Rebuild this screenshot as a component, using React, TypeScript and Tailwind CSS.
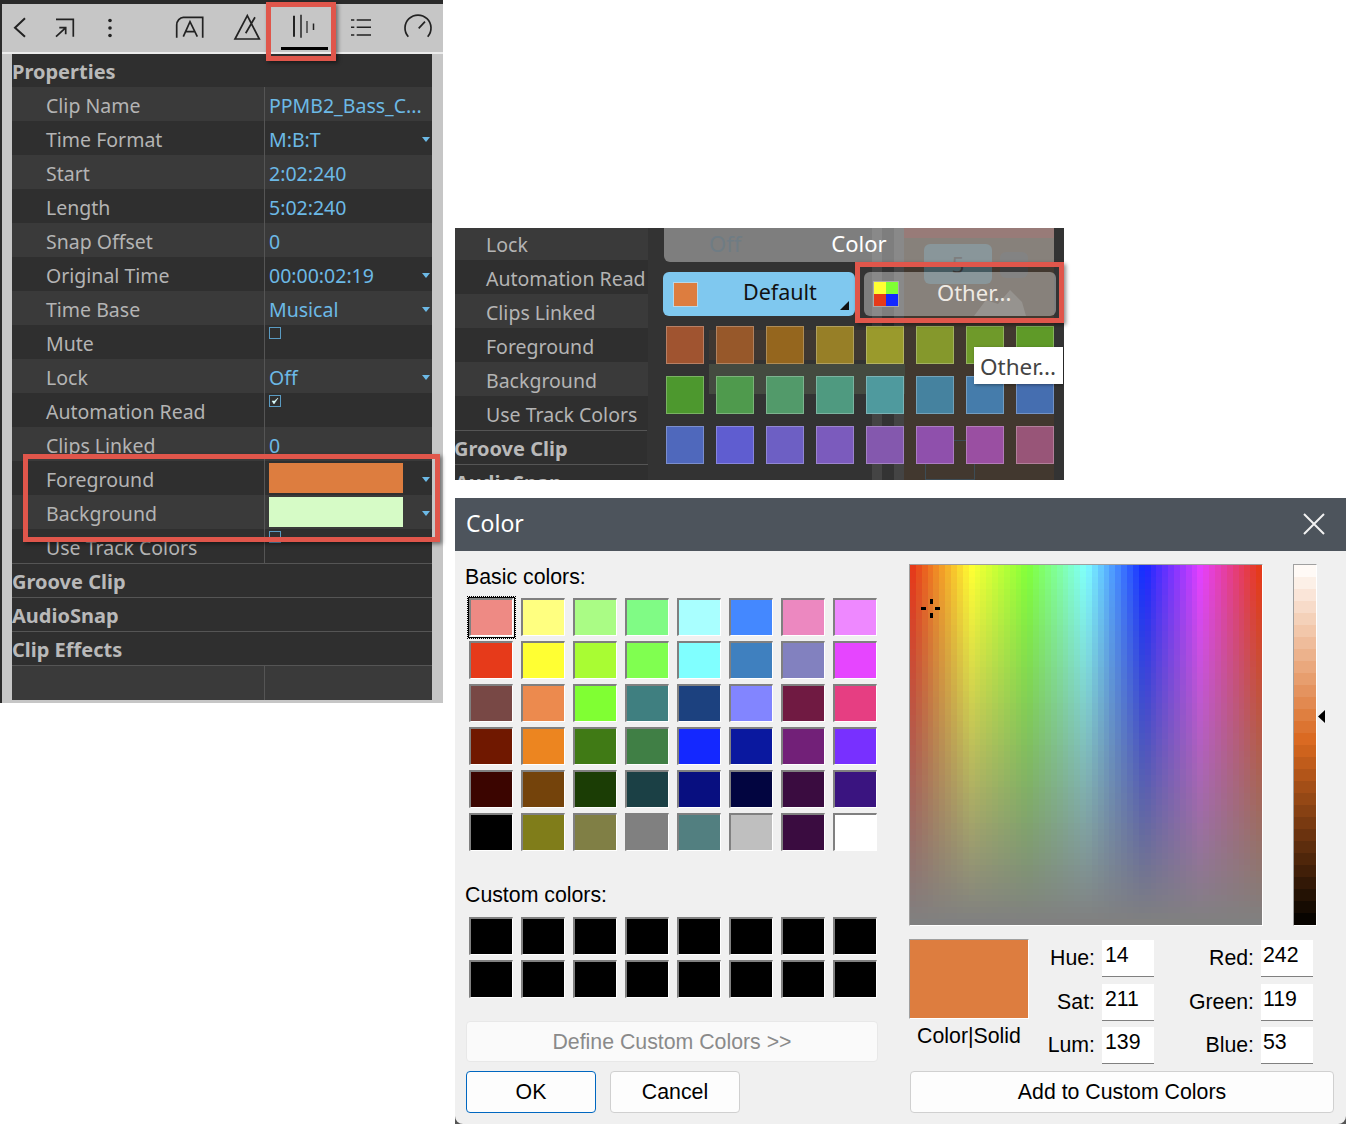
import React from 'react';

type Row = { label: string; value?: string; arrow?: boolean; check?: 'on' | 'off'; swatch?: string };

const rows: Row[] = [
  { label: 'Clip Name', value: 'PPMB2_Bass_C...' },
  { label: 'Time Format', value: 'M:B:T', arrow: true },
  { label: 'Start', value: '2:02:240' },
  { label: 'Length', value: '5:02:240' },
  { label: 'Snap Offset', value: '0' },
  { label: 'Original Time', value: '00:00:02:19', arrow: true },
  { label: 'Time Base', value: 'Musical', arrow: true },
  { label: 'Mute', check: 'off' },
  { label: 'Lock', value: 'Off', arrow: true },
  { label: 'Automation Read', check: 'on' },
  { label: 'Clips Linked', value: '0' },
  { label: 'Foreground', swatch: 'bg-[#dd7d3f]', arrow: true },
  { label: 'Background', swatch: 'bg-[#d6fbc6]', arrow: true },
  { label: 'Use Track Colors', check: 'off' },
];

const trackColors = [
  ['bg-[#a05430]', 'bg-[#97582a]', 'bg-[#95661e]', 'bg-[#977f27]', 'bg-[#9a9a2c]', 'bg-[#85982c]', 'bg-[#6f9a2a]', 'bg-[#5f9a28]'],
  ['bg-[#4d982e]', 'bg-[#4f9a4d]', 'bg-[#529a6a]', 'bg-[#4f9a80]', 'bg-[#4f9a9e]', 'bg-[#45829f]', 'bg-[#457cab]', 'bg-[#456eb0]'],
  ['bg-[#4f68bc]', 'bg-[#5f5dd0]', 'bg-[#6d5fc4]', 'bg-[#7b5bbd]', 'bg-[#8458ae]', 'bg-[#8f50ac]', 'bg-[#9a4fa2]', 'bg-[#985578]'],
];

const basicColors = [
  'bg-[#ee8a84]', 'bg-[#ffff80]', 'bg-[#aafc85]', 'bg-[#80fb85]', 'bg-[#a9ffff]', 'bg-[#4488ff]', 'bg-[#ec88c0]', 'bg-[#ee88ff]',
  'bg-[#e63a1a]', 'bg-[#ffff33]', 'bg-[#a9fc33]', 'bg-[#80ff50]', 'bg-[#80ffff]', 'bg-[#3f80bf]', 'bg-[#8281bf]', 'bg-[#e645ff]',
  'bg-[#784845]', 'bg-[#ec8a4e]', 'bg-[#80ff33]', 'bg-[#3f7f80]', 'bg-[#1c417f]', 'bg-[#8285ff]', 'bg-[#701a42]', 'bg-[#e63e82]',
  'bg-[#701800]', 'bg-[#ec8520]', 'bg-[#407a15]', 'bg-[#407f45]', 'bg-[#1428ff]', 'bg-[#0a189f]', 'bg-[#722078]', 'bg-[#7830ff]',
  'bg-[#3b0500]', 'bg-[#74430b]', 'bg-[#1b3d05]', 'bg-[#1b4045]', 'bg-[#080f80]', 'bg-[#020540]', 'bg-[#3a0c40]', 'bg-[#3a1480]',
  'bg-[#000000]', 'bg-[#807d1a]', 'bg-[#807f45]', 'bg-[#808080]', 'bg-[#527f80]', 'bg-[#bfbfbf]', 'bg-[#3a0c40]', 'bg-[#ffffff]',
];

type RGB = [number, number, number];

const hueStops: RGB[] = [
  [230, 58, 26], [255, 255, 51], [128, 255, 58], [128, 255, 255], [20, 40, 255], [230, 64, 255], [230, 58, 26],
];

const mix = (a: RGB, b: RGB, t: number): RGB => [
  a[0] + (b[0] - a[0]) * t,
  a[1] + (b[1] - a[1]) * t,
  a[2] + (b[2] - a[2]) * t,
];
const css = (c: RGB) => `rgb(${Math.round(c[0])},${Math.round(c[1])},${Math.round(c[2])})`;

const hueAt = (t: number): RGB => {
  const p = Math.min(t * 6, 5.9999);
  const i = Math.floor(p);
  return mix(hueStops[i], hueStops[i + 1], p - i);
};

const Spectrum: React.FC = () => {
  const cells: React.ReactNode[] = [];
  for (let y = 0; y < 60; y++) {
    for (let x = 0; x < 60; x++) {
      const c = mix(hueAt(x / 59), [128, 128, 128], y / 59);
      cells.push(<rect key={`${x}-${y}`} x={x} y={y} width={1.05} height={1.05} fill={css(c)} />);
    }
  }
  return (
    <div className="relative h-[362px] w-[354px] border-t border-l border-t-[#a0a0a0] border-l-[#a0a0a0] border-r border-b border-r-white border-b-white">
      <svg className="block h-full w-full" viewBox="0 0 60 60" preserveAspectRatio="none" shapeRendering="crispEdges">
        {cells}
      </svg>
      <svg className="absolute left-[11px] top-[34px]" width="20" height="20" viewBox="0 0 20 20" fill="#000" shapeRendering="crispEdges">
        <rect x="9" y="0" width="3" height="5" />
        <rect x="9" y="14" width="3" height="5" />
        <rect x="0" y="8" width="5" height="3" />
        <rect x="14" y="8" width="5" height="3" />
      </svg>
    </div>
  );
};

const LumBar: React.FC = () => {
  const steps = Array.from({ length: 30 }, (_, i) => {
    const t = i / 29;
    const c = t < 0.49
      ? mix([255, 250, 246], [217, 104, 31], t / 0.49)
      : mix([217, 104, 31], [8, 4, 0], (t - 0.49) / 0.51);
    return css(c);
  });
  return (
    <div className="h-[362px] w-[24px] border-t border-l border-t-[#a0a0a0] border-l-[#a0a0a0] border-r border-b border-r-white border-b-white">
      <svg className="block h-full w-full" viewBox="0 0 1 30" preserveAspectRatio="none" shapeRendering="crispEdges">
        {steps.map((c, i) => <rect key={i} x={0} y={i} width={1} height={1.05} fill={c} />)}
      </svg>
    </div>
  );
};

const DropArrow: React.FC = () => (
  <svg className="absolute right-[2px] top-[16px]" width="8" height="5" viewBox="0 0 8 5">
    <path d="M0 0H8L4 5Z" fill="#6cb9e6" />
  </svg>
);

const Icon: React.FC<{ className?: string; children: React.ReactNode }> = ({ className, children }) => (
  <svg className={className} width="32" height="32" viewBox="0 0 32 32" fill="none" stroke="#222" strokeWidth="1.7">
    {children}
  </svg>
);

const Toolbar: React.FC = () => (
  <div className="flex h-[48px] items-start pl-[2px] pt-[8px]">
    <Icon>
      <path d="M21 6.3L11 15.7L21 24.7" strokeWidth="2" />
    </Icon>
    <Icon className="ml-[13px]">
      <path d="M7 7.3H24.3V24.7M7 24.7L16 16.3M10.3 15.7H16.7V22.3" />
    </Icon>
    <Icon className="ml-[13px]">
      <circle cx="16" cy="8.5" r="1.8" fill="#222" stroke="none" />
      <circle cx="16" cy="16" r="1.8" fill="#222" stroke="none" />
      <circle cx="16" cy="23.5" r="1.8" fill="#222" stroke="none" />
    </Icon>
    <Icon className="ml-[48px]">
      <path d="M2.7 25.7V13C2.7 9 6 5.3 9.3 5.3H28.7V25.7M9.3 24.7L16 9.7L23.3 24.7M11.5 19.7H21" />
    </Icon>
    <Icon className="ml-[24px]">
      <path d="M17.3 3.7L5 27H29.3ZM15.7 21.3L25 5.3" />
    </Icon>
    <Icon className="ml-[26px]">
      <path d="M6 3.7V24.7" strokeWidth="2" />
      <path d="M13 2.7V25.7" strokeWidth="1.5" />
      <path d="M19 9V21" strokeWidth="1.2" />
      <path d="M25.5 11.5V18" strokeWidth="1.5" />
    </Icon>
    <Icon className="ml-[25px]">
      <path d="M6 8H9.3M11.7 8H26M6 15.3H9.3M11.7 15.3H26M6 23H9.3M11.7 23H26" strokeWidth="1.5" />
    </Icon>
    <Icon className="ml-[25px]">
      <path d="M6.3 24.7A13 13 0 1 1 25.7 24.7M16.7 16.3L23 9.7" />
    </Icon>
  </div>
);

const PropRow: React.FC<{ row: Row; index: number }> = ({ row, index }) => (
  <div className={`flex h-[34px] ${index % 2 === 0 ? 'bg-[#3a3a3a]' : 'bg-[#2f2f2f]'}`}>
    <div className="w-[252px] pl-[34px] text-[19.5px] leading-[38px] text-[#b4b4b4]">{row.label}</div>
    <div className="relative flex-1 border-l border-[#555] pl-[4px] text-[19.5px] leading-[38px] text-[#6cb9e6]">
      {row.value}
      {row.swatch && <div className={`mt-[2px] h-[30px] w-[134px] ${row.swatch}`} />}
      {row.check && (
        <div className="mt-[2px] flex h-[12px] w-[12px] items-center justify-center border border-[#5a9bc2]">
          {row.check === 'on' && (
            <svg width="8" height="8" viewBox="0 0 8 8">
              <path d="M1 4L3 7L7 1L3.5 4Z" fill="#dff" stroke="#dff" strokeWidth="0.5" />
            </svg>
          )}
        </div>
      )}
      {row.arrow && <DropArrow />}
    </div>
  </div>
);

const SectionRow: React.FC<{ label: string }> = ({ label }) => (
  <div className="h-[34px] border-t border-[#555] bg-[#2f2f2f] text-[20px] font-bold leading-[35px] text-[#b9b9b9]">
    {label}
  </div>
);

const PropertiesPanel: React.FC = () => (
  <div className="absolute left-0 top-0 h-[703px] w-[443px] border-l-2 border-t-[4px] border-l-[#2a2a2a] border-t-[#2a2a2a] bg-[#c6c6c6] font-['Noto_Sans',sans-serif]">
    <Toolbar />
    <div className="h-[2px] bg-[#ececec]" />
    <div className="ml-[10px] h-[646px] w-[420px] bg-[#2f2f2f]">
      <div className="h-[33px] text-[20px] font-bold leading-[35px] text-[#b9b9b9]">Properties</div>
      {rows.map((r, i) => <PropRow key={r.label} row={r} index={i} />)}
      <SectionRow label="Groove Clip" />
      <SectionRow label="AudioSnap" />
      <SectionRow label="Clip Effects" />
      <div className="flex h-[35px] border-t border-[#555] bg-[#3a3a3a]">
        <div className="w-[252px]" />
        <div className="flex-1 border-l border-[#555]" />
      </div>
    </div>
  </div>
);

const ColorMenu: React.FC = () => (
  <div className="absolute left-[455px] top-[228px] flex h-[252px] w-[609px] overflow-hidden bg-[#333] font-['Noto_Sans',sans-serif]">
    <div className="w-[193px] shrink-0">
      <div className="h-[32px] pl-[31px] text-[19.5px] leading-[34px] text-[#b4b4b4] bg-[#3a3a3a]">Lock</div>
      {['Automation Read', 'Clips Linked', 'Foreground', 'Background', 'Use Track Colors'].map((l, i) => (
        <div key={l} className={`h-[34px] whitespace-nowrap pl-[31px] text-[19.5px] leading-[38px] text-[#b4b4b4] ${i % 2 === 1 ? 'bg-[#3a3a3a]' : 'bg-[#2f2f2f]'}`}>
          {l}
        </div>
      ))}
      <div className="h-[34px] -translate-x-[1px] border-t border-[#555] bg-[#2f2f2f] text-[20px] font-bold leading-[36px] text-[#b9b9b9]">Groove Clip</div>
      <div className="h-[34px] border-t border-[#555] bg-[#2f2f2f] text-[20px] font-bold leading-[36px] text-[#b9b9b9]">AudioSnap</div>
    </div>
    <div className="relative flex-1">
      {/* blurred window behind the popup */}
      <div className="absolute bottom-0 left-[256px] right-[10px] top-0 bg-[#42382f]" />
      <div className="absolute bottom-0 left-[224px] top-0 w-[10px] bg-[#444]" />
      <div className="absolute bottom-0 left-[246px] top-0 w-[10px] bg-[#444]" />
      <div className="absolute left-[256px] right-[10px] top-0 h-[10px] bg-[#5c2f2a]" />
      <div className="absolute left-[276px] top-[16px] flex h-[40px] w-[68px] items-center justify-center rounded-md bg-[#44595f] text-[22px] text-[#333]">5</div>
      <div className="absolute left-[352px] top-[24px] h-[26px] w-[28px] rounded-md bg-[#3c3c3c]" />
      <div className="absolute left-[61px] top-[102px] h-[30px] w-[196px] bg-[#413831]" />
      <div className="absolute left-[61px] top-[136px] h-[30px] w-[196px] bg-[#444a40]" />
      <div className="absolute left-[277px] top-[212px] h-[40px] w-[50px] border border-[#3d4c55]" />
      <svg className="absolute left-[326px] top-[62px]" width="52" height="26" viewBox="0 0 52 26">
        <path d="M0 26L12 10L24 14L36 0L48 12L52 26Z" fill="#5a554f" />
      </svg>
      <div className="relative">
        <div className="relative ml-[16px] h-[34px] w-[390px] rounded-bl-md bg-white/[0.37] text-center text-[22px] leading-[30px] text-white">
          <span className="absolute left-[45px] top-0 text-[#6f7c84]">Off</span>
          <span>Color</span>
        </div>
        <div className="ml-[15px] mt-[10px] flex gap-[9px]">
          <div className="relative flex h-[44px] w-[192px] items-center rounded-md bg-[#7fc8ef] pl-[10px] text-[21.5px] text-[#111]">
            <div className="h-[25px] w-[25px] border border-[#b8d8e8] bg-[#dd7d3f]" />
            <span className="ml-[45px] pb-[3px]">Default</span>
            <svg className="absolute bottom-[6px] right-[6px]" width="9" height="9" viewBox="0 0 9 9">
              <path d="M9 0V9H0Z" fill="#111" />
            </svg>
          </div>
          <div className="relative flex h-[44px] w-[192px] items-center rounded-md bg-white/[0.37] pl-[9px] text-[22px] text-[#efeae4]">
            <div className="grid h-[26px] w-[26px] grid-cols-2 border border-[#aaa]">
              <div className="bg-[#ffff33]" />
              <div className="bg-[#80ff33]" />
              <div className="bg-[#e63a1a]" />
              <div className="bg-[#1428ff]" />
            </div>
            <span className="ml-[38px] pb-[3px]">Other...</span>
          </div>
        </div>
        <div className="ml-[18px] mt-[10px] flex flex-col gap-[12px]">
          {trackColors.map((line, i) => (
            <div key={i} className="flex gap-[12px]">
              {line.map((c, j) => <div key={j} className={`h-[38px] w-[38px] border border-white/25 ${c}`} />)}
            </div>
          ))}
        </div>
      </div>
      <div className="absolute left-[326px] top-[119px] h-[37px] w-[89px] bg-white pl-[6px] text-[22.5px] leading-[40px] text-[#444] shadow-[1px_1px_3px_rgba(0,0,0,0.4)]">
        Other...
      </div>
    </div>
  </div>
);

const Cell: React.FC<{ color: string; focused?: boolean }> = ({ color, focused }) => (
  <div className={`relative h-[38px] w-[44px] border-t-2 border-l-2 border-r border-b border-t-[#808080] border-l-[#808080] border-r-white border-b-white ${color}`}>
    {focused && (
      <>
        <div className="absolute -inset-[4px] border border-dotted border-black" />
        <div className="absolute -inset-[3px] border border-black" />
      </>
    )}
  </div>
);

const fieldsLeft = [['Hue:', '14'], ['Sat:', '211'], ['Lum:', '139']];
const fieldsRight = [['Red:', '242'], ['Green:', '119'], ['Blue:', '53']];

const ColorDialog: React.FC = () => (
  <div className="absolute left-[455px] top-[498px] flex h-[626px] w-[891px] flex-col bg-[#555] font-['Liberation_Sans',sans-serif] text-[21.3px] text-black">
    <div className="flex h-[53px] shrink-0 items-center justify-between bg-[#4d545c] pb-[2px] pl-[11px] pr-[21px] font-['Noto_Sans',sans-serif] text-[23px] text-white">
      <span>Color</span>
      <svg width="22" height="22" viewBox="0 0 22 22" stroke="#f2f2f2" strokeWidth="2">
        <path d="M1 1L21 21M21 1L1 21" />
      </svg>
    </div>
    <div className="flex flex-1 rounded-b-[8px] bg-[#f0f0f0]">
      <div className="w-[454px] pl-[10px] pt-[14px]">
        <div className="h-[24px] leading-[24px]">Basic colors:</div>
        <div className="ml-[4px] mt-[9px] grid w-[408px] grid-cols-[repeat(8,44px)] gap-x-[8px] gap-y-[5px]">
          {basicColors.map((c, i) => <Cell key={i} color={c} focused={i === 0} />)}
        </div>
        <div className="mt-[32px] h-[24px] leading-[24px]">Custom colors:</div>
        <div className="ml-[4px] mt-[10px] grid w-[408px] grid-cols-[repeat(8,44px)] gap-x-[8px] gap-y-[5px]">
          {Array.from({ length: 16 }, (_, i) => <Cell key={i} color="bg-black" />)}
        </div>
        <div className="ml-px mt-[23px] flex h-[41px] w-[412px] items-center justify-center rounded-[4px] border border-[#e8e8e8] bg-[#fafafa] pt-[2px] text-[#8a8a8a]">
          Define Custom Colors &gt;&gt;
        </div>
        <div className="ml-px mt-[9px] flex gap-[14px]">
          <div className="flex h-[42px] w-[130px] items-center justify-center rounded-[4px] border border-[#0067c0] bg-[#fdfdfd] pt-[2px]">OK</div>
          <div className="flex h-[42px] w-[130px] items-center justify-center rounded-[4px] border border-[#d0d0d0] bg-[#fdfdfd] pt-[2px]">Cancel</div>
        </div>
      </div>
      <div className="flex-1 pt-[13px]">
        <div className="flex">
          <Spectrum />
          <div className="ml-[30px]"><LumBar /></div>
          <svg className="ml-[1px] mt-[146px]" width="7" height="13" viewBox="0 0 7 13">
            <path d="M7 0V13L0 6.5Z" fill="#000" />
          </svg>
        </div>
        <div className="mt-[13px] flex items-start">
          <div className="w-[120px]">
            <div className="h-[80px] w-[120px] border-t border-l border-t-[#a0a0a0] border-l-[#a0a0a0] border-b border-r border-b-white border-r-white bg-[#dd7d3f]" />
            <div className="mt-[5px] text-center leading-[24px]">Color|Solid</div>
          </div>
          <div className="mt-px grid grid-cols-[66px_52px_93px_52px] grid-rows-[repeat(3,37px)] gap-x-[7px] gap-y-[6.5px]">
            {fieldsLeft.map(([l, v], i) => (
              <React.Fragment key={l}>
                <div className="pt-[6px] text-right leading-[24px]">{l}</div>
                <div className="border-b border-[#808080] bg-white pl-[3px] pt-[3px] leading-[24px]">{v}</div>
                <div className="pt-[6px] text-right leading-[24px]">{fieldsRight[i][0]}</div>
                <div className="border-b border-[#808080] bg-white pl-[2px] pt-[3px] leading-[24px]">{fieldsRight[i][1]}</div>
              </React.Fragment>
            ))}
          </div>
        </div>
        <div className="ml-px mt-[7px] flex h-[42px] w-[424px] items-center justify-center rounded-[4px] border border-[#d0d0d0] bg-[#fdfdfd] pt-[2px]">
          Add to Custom Colors
        </div>
      </div>
    </div>
  </div>
);

const Highlight: React.FC<{ className: string }> = ({ className }) => (
  <div className={`absolute border-[5px] border-[#e0564b] shadow-[2px_2px_4px_rgba(0,0,0,0.45)] ${className}`} />
);

export default function App() {
  return (
    <div className="relative h-[1124px] w-[1346px] overflow-hidden bg-white">
      <PropertiesPanel />
      {/* active tab underline */}
      <div className="absolute left-[281px] top-[47px] h-[3px] w-[47px] bg-black" />
      <Highlight className="left-[266px] top-[2px] h-[59px] w-[70px]" />
      <Highlight className="left-[23px] top-[454px] h-[88px] w-[417px]" />
      <ColorMenu />
      <Highlight className="left-[855px] top-[262px] h-[61px] w-[209px]" />
      <ColorDialog />
    </div>
  );
}
